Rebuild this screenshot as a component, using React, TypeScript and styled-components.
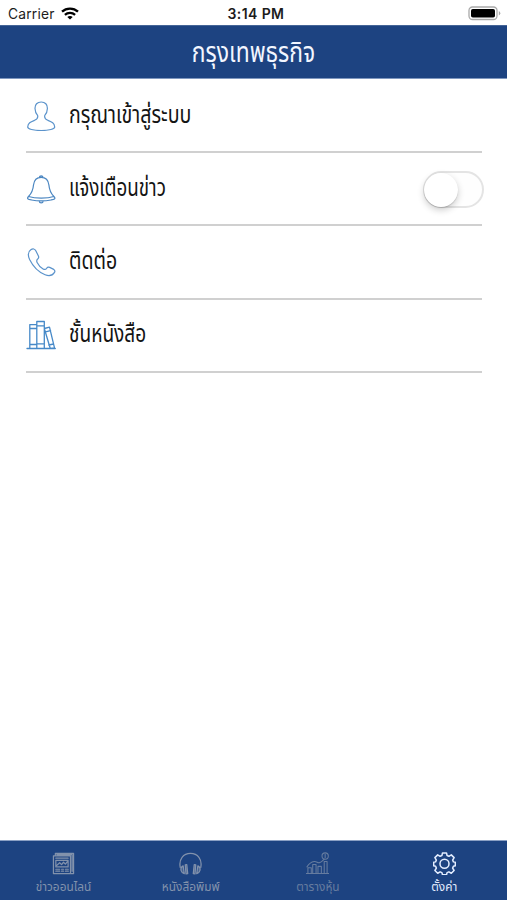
import React from "react";
import styled, { createGlobalStyle } from "styled-components";

const NAVY = "#1d4381";

const GlobalStyle = createGlobalStyle`
  * { box-sizing: border-box; }
  body { margin: 0; background: #fff; }
`;

const Screen = styled.div`
  display: flex;
  flex-direction: column;
  width: 100%;
  height: 900px;
  overflow: hidden;
  background: #fff;
  color: #141414;
  font-family: Inter, "Noto Sans Thai", "Noto Sans", sans-serif;
`;

const StatusBar = styled.div`
  display: grid;
  grid-template-columns: 1fr auto 1fr;
  align-items: center;
  height: 25px;
  padding: 2px 6px 0 8px;
  color: #1c1c1c;
`;

const Carrier = styled.div`
  display: flex;
  align-items: center;
  gap: 6px;
  font-size: 13.8px;
  letter-spacing: 0.2px;
`;

const Clock = styled.div`
  font-weight: 600;
  font-size: 14px;
  letter-spacing: 0.4px;
  padding-left: 3px;
`;

const BatterySlot = styled.div`
  display: flex;
  justify-content: flex-end;
`;

const Header = styled.header`
  display: flex;
  align-items: center;
  justify-content: center;
  height: 54px;
  background: ${NAVY};
  border-top: 1px solid #456597;
  border-bottom: 1px solid #7f97bf;
  color: #f2f6ff;
`;

const Text = styled.span<{ $size: number; $stretch: number; $center?: boolean }>`
  display: inline-block;
  white-space: nowrap;
  font-size: ${(p) => p.$size}px;
  line-height: 1.5;
  transform: scaleX(${(p) => p.$stretch});
  transform-origin: ${(p) => (p.$center ? "center" : "left center")};
`;

const List = styled.main`
  flex: 1;
  padding: 1px 25px 0 26px;
`;

const Row = styled.div`
  display: flex;
  align-items: center;
  height: 73.2px;
  border-bottom: 2px solid #d0d0d0;
`;

const RowLabel = styled.div`
  padding-bottom: 2px;
`;

const IconSlot = styled.div`
  display: flex;
  width: 43px;
  flex: none;
  svg { display: block; }
`;

const Toggle = styled.div`
  width: 61px;
  height: 37px;
  margin: 2px -2px 0 auto;
  border: 2px solid #e4e4e4;
  border-radius: 19px;
  background: #fefefe;
`;

const Knob = styled.div`
  width: 34px;
  height: 34px;
  margin-left: -1px;
  border-radius: 50%;
  background: #fff;
  box-shadow: 0 3px 7px rgba(0, 0, 0, 0.2), 0 1px 1px rgba(0, 0, 0, 0.14);
`;

const TabBar = styled.nav`
  display: grid;
  grid-template-columns: repeat(4, 1fr);
  height: 60px;
  background: ${NAVY};
  border-top: 1px solid #8ba0c4;
`;

const Tab = styled.div<{ $color: string }>`
  display: flex;
  flex-direction: column;
  align-items: center;
  gap: 2px;
  padding: 11px 0 0 1px;
  color: ${(p) => p.$color};
  svg { display: block; flex: none; }
`;

const Line = ({ size, shown = size, children, width = 1.2, color = "#5b93cb" }: {
  size: number; shown?: number; children: React.ReactNode; width?: number; color?: string;
}) => (
  <svg width={shown} height={shown} viewBox={`0 0 ${size} ${size}`} fill="none" stroke={color}
    strokeWidth={width} strokeLinecap="round" strokeLinejoin="round">{children}</svg>
);

const UserIcon = () => (
  <Line size={30}>
    <path d="M15.2 1c-4 0-6.300 2.600-6.200 6.400.1 3 1 5.200 2.600 6.900.6 2.200-.2 3.800-3 5C4.500 21 2 22 1.700 26c-.2 2 5.800 3.500 13.500 3.500S28.900 28 28.700 26c-.3-4-2.800-5-6.900-6.700-2.800-1.200-3.600-2.800-3-5 1.600-1.700 2.500-3.900 2.600-6.900C21.500 3.600 19.200 1 15.200 1z" />
  </Line>
);

const BellIcon = () => (
  <Line size={30} color="#4b86c1">
    <path d="M13.500 3.500a1.700 1.700 0 1 1 3.400 0M15.200 3.300C10.500 3.300 8 6.500 7.500 11 7 17 5.500 19.500 2.500 22.500M15.200 3.300c4.700 0 7.200 3.200 7.700 7.700.5 6 2 8.500 5 11.500M2.500 22.500C0 25 3 25.500 5.500 26c6 1.200 13.500 1.200 19.500 0 2.500-.5 5.500-1 2.900-3.500M2.500 22.500c7 2.100 18.400 2.100 25.400 0M13.200 27c.2 2.600 3.800 2.600 4 0" />
  </Line>
);

const PhoneIcon = () => (
  <Line size={30}>
    <path transform="translate(.6 .6)" d="M4.200 2.200C.8 4.500.9 7.200 3 12c3.800 7.700 8.800 12.600 15.500 15.200 4 1.500 7.700.4 9.400-2.400.8-1.400.4-2.200-.8-3l-4-2c-1.500-.7-2.300-.3-3 .8-1 1.500-2.100 1.600-3.600.7-2.600-1.600-4.700-3.900-6-6.500-.8-1.600-.5-2.500.8-3.600.9-.8 1.100-1.600.5-2.900L9.200 3.100C8.200 1.200 6.300.8 4.200 2.200z" />
  </Line>
);

const BooksIcon = () => (
  <Line size={30} width={1.3} color="#4689c8">
    <path d="M1 28.500h28.300M3.800 28.300V4.600h7v23.700M3.800 8.500h7M3.800 24.500h7M10.800 28.300V1.500h7.500v26.800M10.800 5.800h7.500M10.800 23.800h7.500M18.300 8.500l5.200-1.400 5 20.800-4.300.4-5.800-19.600zM19.500 11.900l5.100-1.300M22.800 25l4.800-1" />
  </Line>
);

const NewsIcon = () => (
  <Line size={24} shown={23} width={1.3} color="currentColor">
    <path d="M1.500 4v18.500h17.800V4zM3.500 3.800V1.500h19v21h-3M5 2.700h16v17.500M4 6.500h12.800M4 8.800h12.800v6.800H4zM5 14l3-2.800 2 2 2-2.500 2 2 2-2.700M4 18h4M4 20h4M10 18h2M10 20h2M14 18h3M14 20h3" />
  </Line>
);

const HeadphonesIcon = () => (
  <Line size={24} shown={23} width={1.3} color="currentColor">
    <path d="M1.300 16C-.4 7.500 4.500 1.500 12 1.500S24.400 7.500 22.700 16" />
    <path d="M4.300 14.500c-2 1.200-2.700 3-2.100 5 .5 1.700 1.700 2.800 3.300 3.100zM6.500 13.300l1.600-.2 1 9.400-1.800.3zM19.700 14.500c2 1.200 2.700 3 2.100 5-.5 1.700-1.700 2.800-3.300 3.100zM17.500 13.300l-1.600-.2-1 9.400 1.800.3z" fill="currentColor" fillOpacity=".4" />
  </Line>
);

const StocksIcon = () => (
  <Line size={24} shown={23} width={1.1} color="currentColor">
    <circle cx="20" cy="4.200" r="3.300" />
    <path d="M20 2.500v3.400M0 22.500h24M2 22v-5.500h3.500V22M7 22v-9h3.500v9M12.500 22v-7H16v7M19 22V10h3v12M1 15.500c2-3 4-5 7.500-5.500 3-.4 3.500 2 6 1 2-.8 3-2.500 4.500-3.500" />
  </Line>
);

const GearIcon = () => (
  <Line size={24} shown={23} width={1.6} color="currentColor">
    <path d="M9.900 1h4.200l.6 2.700 1.900.8 2.500-1.500 2.900 2.900-1.500 2.500.8 1.900 2 .5v3.600l-2 .5-.8 1.900 1.500 2.500-2.900 2.900-2.500-1.500-1.900.8-.6 2.300H9.900l-.6-2.300-1.900-.8-2.500 1.500L2 19.300l1.500-2.500-.8-1.900-2-.5v-3.600l2-.5.8-1.900L2 5.900 4.900 3l2.500 1.500 1.900-.8z" />
    <circle cx="12" cy="12.300" r="4.700" />
  </Line>
);

const WifiIcon = () => (
  <svg width="18" height="13" viewBox="0 0 18 13" fill="none" stroke="#000" strokeWidth="2.300">
    <path d="M1 4.700c4.500-4.200 11.500-4.200 16 0M3.900 7.800c2.900-2.600 7.300-2.600 10.200 0" />
    <path d="M9 12.600L6.300 9.900c1.500-1.300 3.900-1.300 5.400 0z" fill="#000" stroke="none" />
  </svg>
);

const BatteryIcon = () => (
  <svg width="33" height="15" viewBox="0 0 33 15">
    <rect x="1" y="1" width="28" height="12.500" rx="3.500" fill="#fff" stroke="#a9a9a9" strokeWidth="1.300" />
    <rect x="3" y="3" width="24" height="8.500" rx="1.800" fill="#000" />
    <path d="M30.800 5v4.500q1.500-.7 1.500-2.250T30.800 5z" fill="#a9a9a9" />
  </svg>
);

const rows = [
  { text: "กรุณาเข้าสู่ระบบ", icon: <UserIcon />, stretch: 0.816 },
  { text: "แจ้งเตือนข่าว", icon: <BellIcon />, stretch: 0.783, toggle: true },
  { text: "ติดต่อ", icon: <PhoneIcon />, stretch: 0.815 },
  { text: "ชั้นหนังสือ", icon: <BooksIcon />, stretch: 0.795 },
];

const tabs = [
  { text: "ข่าวออนไลน์", icon: <NewsIcon />, color: "#8292ac", stretch: 0.91 },
  { text: "หนังสือพิมพ์", icon: <HeadphonesIcon />, color: "#8292ac", stretch: 0.91 },
  { text: "ตารางหุ้น", icon: <StocksIcon />, color: "#667c9f", stretch: 0.91 },
  { text: "ตั้งค่า", icon: <GearIcon />, color: "#e3edff", stretch: 0.91 },
];

export default function App() {
  return (
    <Screen>
      <GlobalStyle />
      <StatusBar>
        <Carrier>Carrier <WifiIcon /></Carrier>
        <Clock>3:14 PM</Clock>
        <BatterySlot><BatteryIcon /></BatterySlot>
      </StatusBar>
      <Header><Text $size={28} $stretch={0.817} $center>กรุงเทพธุรกิจ</Text></Header>
      <List>
        {rows.map((r) => (
          <Row key={r.text}>
            <IconSlot>{r.icon}</IconSlot>
            <RowLabel><Text $size={24} $stretch={r.stretch}>{r.text}</Text></RowLabel>
            {r.toggle && <Toggle><Knob /></Toggle>}
          </Row>
        ))}
      </List>
      <TabBar>
        {tabs.map((t) => (
          <Tab key={t.text} $color={t.color}>
            {t.icon}
            <Text $size={13} $stretch={t.stretch} $center>{t.text}</Text>
          </Tab>
        ))}
      </TabBar>
    </Screen>
  );
}
